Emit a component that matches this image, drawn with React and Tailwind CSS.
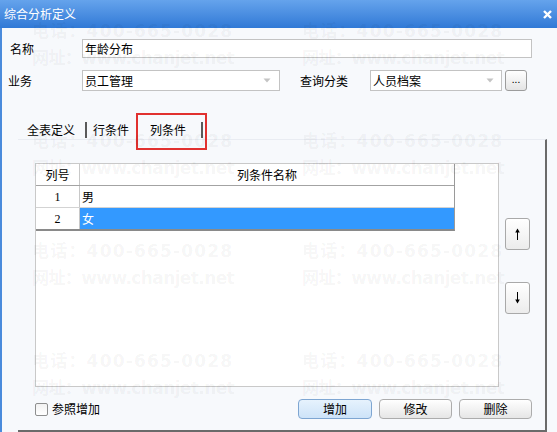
import React from "react";

const WATERMARK_ROWS = [0, 1, 2, 3];

// faint arrow used on the move up / move down buttons
const Arrow = ({ down }) => (
  <svg width="7" height="12" viewBox="0 0 7 12" className={down ? "rotate-180" : ""}>
    <path d="M3.5 0.5 L1.2 4.5 H5.8 Z" fill="#000" />
    <rect x="3" y="4" width="1" height="8" fill="#000" />
  </svg>
);

const SelectArrow = () => (
  <svg width="8" height="5" viewBox="0 0 8 5">
    <path d="M0.5 0.5 H7.5 L4 4.5 Z" fill="#c4c4c4" />
  </svg>
);

const App = () => {
  return (
    <div className="relative w-[557px] h-[432px] overflow-hidden bg-[#f7f9fc] text-[12px] text-black font-['Noto_Sans_CJK_SC','Noto_Sans',sans-serif] flex flex-col">
      {/* Title bar */}
      <div className="h-[28px] shrink-0 flex items-center justify-between pl-[4px] pr-[5px] bg-gradient-to-b from-[#65a3ec] to-[#3079d6]">
        <span className="text-white leading-none">综合分析定义</span>
        <svg width="9" height="9" viewBox="0 0 9 9">
          <path d="M1 1 L8 8 M8 1 L1 8" stroke="#fff" strokeWidth="2.4" />
        </svg>
      </div>

      {/* Body */}
      <div className="flex-1 border-l-2 border-[#4a8bdc] flex flex-col">
        {/* 名称 */}
        <div className="flex items-center mt-[11px] h-[19px]">
          <span className="w-[80px] pl-[8px]">名称</span>
          <div className="w-[450px] h-[19px] bg-white border border-[#c3c3c3] flex items-center pl-[2px] leading-none">
            年龄分布
          </div>
        </div>

        {/* 业务 / 查询分类 */}
        <div className="flex items-center mt-[12px] h-[21px]">
          <span className="w-[80px] pl-[6px]">业务</span>
          <div className="w-[198px] h-[21px] bg-white border border-[#c3c3c3] flex items-center justify-between pl-[2px] pr-[8px] leading-none">
            <span>员工管理</span>
            <SelectArrow />
          </div>
          <span className="ml-[20px] w-[70px]">查询分类</span>
          <div className="w-[132px] h-[21px] bg-white border border-[#c3c3c3] flex items-center justify-between pl-[2px] pr-[7px] leading-none">
            <span>人员档案</span>
            <SelectArrow />
          </div>
          <button className="ml-[3px] w-[22px] h-[21px] rounded-[3px] border border-[#9c9c9c] bg-gradient-to-b from-white to-[#e4e4e4] text-[10px] leading-none pb-[3px]">
            ...
          </button>
        </div>

        {/* Tab strip */}
        <div className="flex items-center mt-[30px] h-[18px] ml-[25px]">
          <span>全表定义</span>
          <span className="ml-[10px] w-[2px] h-[16px] bg-[#5a5a5a]" />
          <span className="ml-[6px]">行条件</span>
          <span className="ml-[21px]">列条件</span>
          <span className="ml-[15px] w-[2px] h-[16px] bg-[#5a5a5a]" />
        </div>

        {/* Tab page */}
        <div className="ml-[16px] w-[529px] flex-1 border-t border-[#e9ecf2] border-r-2 border-b-2 border-r-[#6a6a6a] border-b-[#6a6a6a] flex flex-col pl-[17px] pt-[23px]">
          <div className="flex">
            {/* list box */}
            <div className="w-[464px] h-[224px] bg-white border border-[#c9c9c9]">
              <div className="w-[419px] border-r border-b-2 border-r-[#9a9a9a] border-b-[#8a8a8a]">
                <div className="flex h-[22px] border-b border-[#a3a3a3]">
                  <div className="w-[44px] border-r border-[#c8c8c8] flex items-center justify-center">列号</div>
                  <div className="flex-1 flex items-center justify-center">列条件名称</div>
                </div>
                <div className="flex h-[22px] border-b border-[#d3d3d3]">
                  <div className="w-[44px] border-r border-[#c8c8c8] flex items-center justify-center font-['Liberation_Serif',serif]">1</div>
                  <div className="flex-1 flex items-center pl-[2px]">男</div>
                </div>
                <div className="flex h-[21px]">
                  <div className="w-[44px] border-r border-[#c8c8c8] flex items-center justify-center font-['Liberation_Serif',serif]">2</div>
                  <div className="flex-1 flex items-center pl-[2px] bg-[#3399ff] text-white">女</div>
                </div>
              </div>
            </div>

            {/* move buttons */}
            <div className="flex flex-col ml-[6px] pt-[55px] gap-[32px]">
              <button className="w-[25px] h-[32px] rounded-[3px] border border-[#a9a9a9] bg-gradient-to-b from-white to-[#ececec] flex items-center justify-center">
                <Arrow />
              </button>
              <button className="w-[25px] h-[32px] rounded-[3px] border border-[#a9a9a9] bg-gradient-to-b from-white to-[#ececec] flex items-center justify-center">
                <Arrow down />
              </button>
            </div>
          </div>

          {/* bottom row */}
          <div className="flex items-center mt-[12px] h-[20px]">
            <span className="w-[13px] h-[13px] rounded-[2px] border border-[#8e8f8f] bg-gradient-to-b from-[#f2f2f2] to-white" />
            <span className="ml-[4px]">参照增加</span>
            <button className="ml-[198px] w-[74px] h-[20px] rounded-[4px] border border-[#7ea6d2] bg-gradient-to-b from-[#e6f2fd] to-[#cde3f8] leading-none">
              增加
            </button>
            <button className="ml-[7px] w-[73px] h-[20px] rounded-[4px] border border-[#acacac] bg-gradient-to-b from-white to-[#e6e6e6] leading-none">
              修改
            </button>
            <button className="ml-[7px] w-[73px] h-[20px] rounded-[4px] border border-[#acacac] bg-gradient-to-b from-white to-[#e6e6e6] leading-none">
              删除
            </button>
          </div>
        </div>
      </div>

      {/* highlight box drawn over the active tab */}
      <div className="absolute left-[136px] top-[113px] w-[71px] h-[37px] border-2 border-[#e1312f] pointer-events-none" />

      {/* watermark overlay */}
      <div className="absolute left-[32px] top-[18px] pointer-events-none grid grid-cols-[270px_270px] auto-rows-[110px] text-[17px] font-semibold text-black/[0.05] font-['DejaVu_Sans','Noto_Sans_CJK_SC',sans-serif] leading-[27px]">
        {WATERMARK_ROWS.map((r) => (
          <React.Fragment key={r}>
            {[0, 1].map((c) => (
              <div key={c} className="whitespace-nowrap">
                <div className="tracking-[1.2px]">电话：400-665-0028</div>
                <div className="tracking-[-0.6px]">网址：www.chanjet.net</div>
              </div>
            ))}
          </React.Fragment>
        ))}
      </div>
    </div>
  );
};

export default App;
